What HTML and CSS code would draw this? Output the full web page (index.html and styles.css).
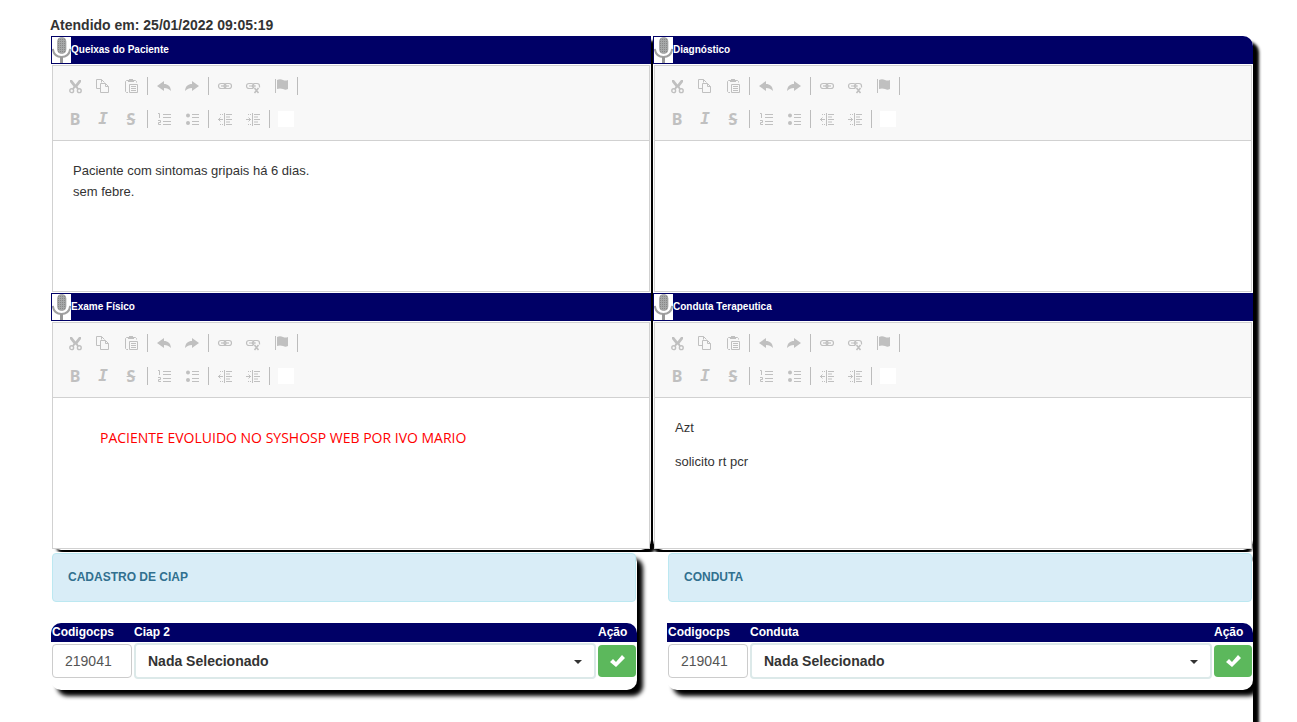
FILE: index.html
```html
<!DOCTYPE html>
<html lang="pt-BR">
<head>
<meta charset="utf-8">
<title>Atendimento</title>
<link rel="stylesheet" href="styles.css">
</head>
<body>
<svg class="sprite" aria-hidden="true">
  <defs>
    <pattern id="mesh" width="2" height="2" patternUnits="userSpaceOnUse"><rect width="2" height="2" fill="#a6a8a8"/><rect width="1" height="1" fill="#888"/></pattern>
  </defs>
  <symbol id="mic" viewBox="0 0 19 26"><rect x="5.500" y=".5" width="8.500" height="16" rx="4" fill="url(#mesh)" stroke="#999" stroke-width=".6"/><path d="M.8 12C1.500 17 4.500 20 9.500 20S17.500 17 18.200 12" fill="none" stroke="#a0a0a0" stroke-width="2"/><path d="M9.500 20v6" stroke="#999" stroke-width="3"/></symbol>
  <symbol id="cut" viewBox="0 0 16 16"><path d="M3 2h2l3.500 4.500L12 2h2v2l-3.500 4.500L12 11h-2L8.500 9.500 7 11H5l1.500-2.500L3 4z" fill="currentColor"/><g fill="none" stroke="currentColor" stroke-width="1.400"><circle cx="4.700" cy="12.700" r="1.900"/><circle cx="12.300" cy="12.700" r="1.900"/></g></symbol>
  <symbol id="copy" viewBox="0 0 16 16"><g fill="none" stroke="currentColor"><path d="M5 10.500H1.500v-9h5l3 3"/><path d="M5.500 5.500h5l3 3v6h-8z"/><path d="M6.500 1.500v3M10.500 5.500v3h3"/></g></symbol>
  <symbol id="paste" viewBox="0 0 16 16"><g fill="none" stroke="currentColor"><path d="M5 2.500H3.500l-1 1v10l1 1H5M11 2.500h1.500l1 1v1"/><path d="M6.500 6.500h8v8h-8zM8 8.500h5M8 10.500h5M8 12.500h5"/></g><path d="M5 2h1V1h4v1h1v2H5z" fill="currentColor"/></symbol>
  <symbol id="undo" viewBox="0 0 16 16"><path d="M1 8l7-5v3c4 0 6.500 2 7 7-2-2-4-3-7-3v3z" fill="currentColor"/></symbol>
  <symbol id="redo" viewBox="0 0 16 16"><path d="M15 8L8 3v3c-4 0-6.500 2-7 7 2-2 4-3 7-3v3z" fill="currentColor"/></symbol>
  <symbol id="link" viewBox="0 0 16 16"><g fill="none" stroke="currentColor" stroke-width="1.200"><rect x="1.500" y="5.500" width="7.500" height="5" rx="2.500"/><rect x="7" y="5.500" width="7.500" height="5" rx="2.500"/><path d="M4 8h8"/></g></symbol>
  <symbol id="unlink" viewBox="0 0 16 16"><g fill="none" stroke="currentColor" stroke-width="1.200"><rect x="1.500" y="5.500" width="7.500" height="5" rx="2.500"/><path d="M8 9.500L7 8l2-2.500h3A2.500 2.500 0 0 1 14.500 8v1.500M4 8h7"/><path d="M9.500 10l4 5M13.500 10l-4 5" stroke-width="1.600"/></g></symbol>
  <symbol id="flag" viewBox="0 0 16 16"><path d="M2.500 1v14" stroke="currentColor"/><path d="M4 2c2-1 4-1 6 0 2 .7 3 .7 5 0v9c-2 1-3 1-5 0-2-.7-4-.7-6 0z" fill="currentColor"/></symbol>
  <symbol id="ol" viewBox="0 0 16 16"><g fill="none" stroke="currentColor"><path d="M2 2.500h1.500V7M2 9.500h2.500v2h-2v2H5M7 3.500h8M7 6.500h8M7 10.500h8M7 13.500h8"/></g></symbol>
  <symbol id="ul" viewBox="0 0 16 16"><circle cx="4" cy="4.500" r="2" fill="currentColor"/><circle cx="4" cy="12" r="2" fill="currentColor"/><path d="M8 3.500h7M8 6.500h7M8 10.500h7M8 13.500h7" stroke="currentColor"/></symbol>
  <symbol id="outdent" viewBox="0 0 16 16"><g fill="none" stroke="currentColor"><path d="M7.500 2v13M9 3.500h6M9 6h4M9 8.500h6M9 11h4M9 13.500h6M1 8.500h5M3.500 6.500l-2 2 2 2"/><path d="M3 3.500h4M3 13.500h4" stroke-dasharray="1 1"/></g></symbol>
  <symbol id="indent" viewBox="0 0 16 16"><g fill="none" stroke="currentColor"><path d="M7.500 2v13M9 3.500h6M9 6h4M9 8.500h6M9 11h4M9 13.500h6M1 8.500h5M3.500 6.500l2 2-2 2"/><path d="M3 3.500h4M3 13.500h4" stroke-dasharray="1 1"/></g></symbol>
  <symbol id="check" viewBox="0 0 16 14"><path d="M1 8l3-3 3 3 6-7 3 3-9 9z" fill="currentColor"/></symbol>
</svg>

<h1 class="attended">Atendido em: 25/01/2022 09:05:19</h1>
<main class="record">
  <div class="editors">
    <div class="card">
      <section class="field">
        <h2 class="bar"><svg class="mic"><use href="#mic"/></svg><span>Queixas do Paciente</span></h2>
        <div class="editor"><div class="toolbar"></div>
          <div class="content" role="textbox" aria-label="Queixas do Paciente" contenteditable="true" spellcheck="false"><p>Paciente com sintomas gripais há 6 dias.<br>sem febre.</p></div></div>
      </section>
      <section class="field">
        <h2 class="bar"><svg class="mic"><use href="#mic"/></svg><span>Exame Físico</span></h2>
        <div class="editor"><div class="toolbar"></div>
          <div class="content" role="textbox" aria-label="Exame Físico" contenteditable="true" spellcheck="false"><p class="notice">PACIENTE EVOLUIDO NO SYSHOSP WEB POR IVO MARIO</p></div></div>
      </section>
    </div>
    <div class="card card-end">
      <section class="field">
        <h2 class="bar"><svg class="mic"><use href="#mic"/></svg><span>Diagnóstico</span></h2>
        <div class="editor"><div class="toolbar"></div>
          <div class="content" role="textbox" aria-label="Diagnóstico" contenteditable="true" spellcheck="false"></div></div>
      </section>
      <section class="field">
        <h2 class="bar"><svg class="mic"><use href="#mic"/></svg><span>Conduta Terapeutica</span></h2>
        <div class="editor"><div class="toolbar"></div>
          <div class="content" role="textbox" aria-label="Conduta Terapeutica" contenteditable="true" spellcheck="false"><p>Azt</p><p>solicito rt pcr</p></div></div>
      </section>
    </div>
  </div>

  <div class="codes">
    <section class="code-card">
      <h2 class="alert">CADASTRO DE CIAP</h2>
      <table class="grid">
        <thead><tr><th class="col-code"><label for="code1">Codigocps</label></th><th><label for="ciap">Ciap 2</label></th><th class="col-action">Ação</th></tr></thead>
        <tbody><tr>
          <td><input class="code" id="code1" type="text" value="219041"></td>
          <td><div class="picker"><select id="ciap"><option>Nada Selecionado</option></select></div></td>
          <td><button class="confirm" type="button" aria-label="Confirmar"><svg><use href="#check"/></svg></button></td>
        </tr></tbody>
      </table>
    </section>
    <section class="code-card">
      <h2 class="alert">CONDUTA</h2>
      <table class="grid grid-end">
        <thead><tr><th class="col-code"><label for="code2">Codigocps</label></th><th><label for="conduta">Conduta</label></th><th class="col-action">Ação</th></tr></thead>
        <tbody><tr>
          <td><input class="code" id="code2" type="text" value="219041"></td>
          <td><div class="picker"><select id="conduta"><option>Nada Selecionado</option></select></div></td>
          <td><button class="confirm" type="button" aria-label="Confirmar"><svg><use href="#check"/></svg></button></td>
        </tr></tbody>
      </table>
    </section>
  </div>
</main>
<script src="toolbar.js"></script>
</body>
</html>
```
FILE: toolbar.js
```js
const rows = [
  [["cut", "Recortar"], ["copy", "Copiar"], ["paste", "Colar"], null,
   ["undo", "Desfazer"], ["redo", "Refazer"], null,
   ["link", "Link"], ["unlink", "Remover link"], ["flag", "Âncora"], null],
  [["B", "Negrito"], ["I", "Itálico"], ["S", "Tachado"], null,
   ["ol", "Lista numerada"], ["ul", "Lista"], null,
   ["outdent", "Diminuir recuo"], ["indent", "Aumentar recuo"], null,
   ["blank", "Estilo"]]
];

function toolMarkup(item) {
  if (!item) return '<span class="sep"></span>';
  const [name, label] = item;
  let face = `<svg><use href="#${name}"/></svg>`;
  if (name.length === 1) face = `<span class="letter letter-${name}">${name}</span>`;
  if (name === "blank") face = '<span class="blank"></span>';
  return `<button class="tool" type="button" aria-label="${label}">${face}</button>`;
}

document.querySelectorAll(".toolbar").forEach(bar => {
  bar.innerHTML = rows.map(r => `<div class="tools">${r.map(toolMarkup).join("")}</div>`).join("");
});
```
FILE: styles.css
```css
* { box-sizing: border-box; }

body {
  display: flex;
  flex-direction: column;
  min-height: 100vh;
  margin: 0;
  padding: 15px 44px 0 51px;
  background: #fff;
  color: #333;
  font-family: "Liberation Sans", Arial, sans-serif;
  font-size: 13px;
}

.sprite { position: absolute; width: 0; height: 0; }

.attended {
  margin: 0 0 1px -1px;
  font-size: 14px;
  line-height: 20px;
}

.record {
  flex: 1;
  border-radius: 10px 10px 0 0;
  background: #fff;
  box-shadow: 6px 6px 3px #000;
}

.editors {
  display: grid;
  grid-template-columns: 1fr 1fr;
  gap: 2px;
}

.card {
  border-radius: 0 0 10px 10px;
  background: #fff;
  box-shadow: 5px 5px 3px #000;
}
.card-end { border-top-right-radius: 10px; box-shadow: 0 5px 3px #000; }
.card-end .field:first-child .bar { border-top-right-radius: 10px; }

.bar {
  display: flex;
  align-items: center;
  height: 28px;
  margin: 0;
  padding: 1px;
  background: #006;
  color: #fff;
  font-size: 10px;
}
.bar span { padding-bottom: 2px; }
.mic { width: 19px; height: 26px; background: #fff; }

.editor { margin: 1px; border: 1px solid #d1d1d1; background: #fff; }

.toolbar {
  display: flex;
  flex-direction: column;
  gap: 5px;
  padding: 6px 8px 7px;
  border-bottom: 1px solid #d1d1d1;
  background: #f8f8f8;
}
.tools { display: flex; align-items: center; }
.tool {
  display: flex;
  align-items: center;
  justify-content: center;
  width: 28px;
  height: 28px;
  padding: 0;
  border: 0;
  background: none;
  color: #c0c0c0;
}
.tool svg { width: 16px; height: 16px; }
.sep { width: 1px; height: 18px; margin: 0 2px; background: #bcbcbc; }
.letter { font: bold 16px/18px "Noto Sans", sans-serif; padding-bottom: 1px; }
.letter-I { font-family: "DejaVu Sans Mono", monospace; font-style: italic; }
.letter-S { text-decoration: line-through; }
.blank { width: 16px; height: 16px; background: #fff; }

.content {
  height: 150px;
  padding: 19px 20px;
  overflow: hidden;
  line-height: 21px;
}
.content p { margin: 0 0 13px; }
.content .notice {
  margin: 10px 27px;
  color: #f00;
  font-family: "Open Sans", sans-serif;
  font-size: 14px;
}

.codes {
  position: relative;
  display: grid;
  grid-template-columns: 1fr 1fr;
  gap: 30px;
  margin-top: 2px;
  padding-bottom: 20px;
  overflow: hidden;
  background: #fff;
}
.code-card {
  padding: 1px 0 10px;
  border-radius: 10px;
  background: #fff;
  box-shadow: 6px 6px 4px #000;
}
.alert {
  margin: 0 1px 21px;
  padding: 15px;
  border: 1px solid #bce8f1;
  border-radius: 4px;
  background: #d9edf7;
  color: #31708f;
  font-size: 12px;
  line-height: 17px;
}

.grid { width: 100%; table-layout: fixed; border-collapse: separate; border-spacing: 0; }
.grid th {
  height: 19px;
  padding: 0 1px;
  background: #006;
  color: #fff;
  font-size: 12px;
  line-height: 19px;
  text-align: left;
}
.grid th:first-child { border-top-left-radius: 10px; }
.grid th:last-child { border-top-right-radius: 10px; }
.grid-end th:first-child { border-top-left-radius: 0; }
.grid td { padding: 1px; }
.col-code { width: 82px; }
.col-action { width: 40px; }

.code {
  display: block;
  width: 80px;
  height: 34px;
  padding: 6px 12px;
  border: 1px solid #ccc;
  border-radius: 4px;
  color: #555;
  font: 14px "Liberation Sans", Arial, sans-serif;
}
.picker { position: relative; }
.picker select {
  display: block;
  width: 100%;
  height: 36px;
  padding: 0 12px;
  border: 2px solid #dce9e9;
  border-radius: 4px;
  background: #fff;
  color: #333;
  font: bold 14px "Liberation Sans", Arial, sans-serif;
  appearance: none;
}
.picker::after {
  content: "";
  position: absolute;
  top: 17px;
  right: 14px;
  border: 4px solid transparent;
  border-top-color: #333;
  border-bottom: 0;
}
.confirm {
  display: flex;
  align-items: center;
  justify-content: center;
  width: 38px;
  height: 32px;
  padding: 0;
  border: 0;
  border-radius: 4px;
  background: #5cb85c;
  color: #fff;
}
.confirm svg { width: 16px; height: 14px; }
```
